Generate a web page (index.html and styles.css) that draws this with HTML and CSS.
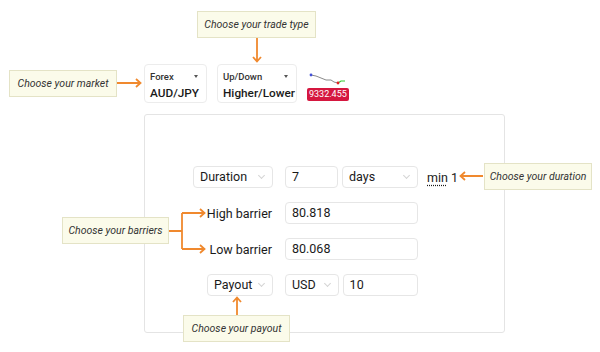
FILE: index.html
```html
<!DOCTYPE html>
<html lang="en">
<head>
    <meta charset="UTF-8">
    <title>Trade form guide</title>
    <link rel="stylesheet" href="styles.css">
</head>
<body>
    <div class="page">
        <div class="header">
            <div class="picker picker-market">
                <div class="picker-label">Forex <span class="caret"></span></div>
                <div class="picker-value">AUD/JPY</div>
            </div>
            <div class="picker picker-type">
                <div class="picker-label">Up/Down <span class="caret"></span></div>
                <div class="picker-value">Higher/Lower</div>
            </div>
            <div class="spot">
                <svg class="spark" width="40" height="14" viewBox="0 0 40 14">
                    <polyline points="3,3 8,4 13,6 18,8 23,8 26,10 30,11" fill="none" stroke="#8a8a8a" stroke-width="1"/>
                    <polyline points="30,11 33,9 37,9" fill="none" stroke="#3c3" stroke-width="1.2"/>
                    <circle cx="3" cy="3" r="1.4" fill="#4452d8"/>
                    <circle cx="30" cy="11" r="1.4" fill="#e02424"/>
                </svg>
                <div class="spot-badge">9332.455</div>
            </div>
        </div>

        <div class="panel">
            <div class="form-grid">
                <div class="field select w-duration">Duration</div>
                <div class="pair">
                    <div class="field w-amount">7</div>
                    <div class="field select w-unit">days</div>
                </div>
                <div class="hint"><abbr>min</abbr> 1</div>

                <div class="label">High barrier</div>
                <div class="field w-wide">80.818</div>
                <div></div>

                <div class="label">Low barrier</div>
                <div class="field w-wide">80.068</div>
                <div></div>

                <div class="field select w-payout">Payout</div>
                <div class="pair">
                    <div class="field select w-currency">USD</div>
                    <div class="field w-unit">10</div>
                </div>
                <div></div>
            </div>
        </div>

        <!-- callouts -->
        <div class="note note-market">Choose your market</div>
        <div class="note note-type">Choose your trade type</div>
        <div class="note note-duration">Choose your duration</div>
        <div class="note note-barriers">Choose your barriers</div>
        <div class="note note-payout">Choose your payout</div>

        <svg class="arrows" width="600" height="352" viewBox="0 0 600 352">
            <g fill="none" stroke="#f0892e" stroke-width="1.8">
                <path d="M117 83 H140 M136 79 L140.5 83 L136 87"/>
                <path d="M257 38 V61 M253 57 L257 61.5 L261 57"/>
                <path d="M483 176 H461 M465 172 L460.5 176 L465 180"/>
                <path d="M169 231 H182 M182 213 V249 M182 213 H204 M182 249 H204 M200 209 L204.5 213 L200 217 M200 245 L204.5 249 L200 253"/>
                <path d="M237 315 V298 M233 302 L237 297.5 L241 302"/>
            </g>
        </svg>
    </div>
</body>
</html>
```

FILE: styles.css
```css
body { margin: 0; background: #fff; font-family: Roboto, "Noto Sans", Arial, sans-serif; color: #222; }
.page { position: relative; width: 600px; height: 352px; overflow: hidden; }

.header { display: flex; gap: 10px; padding: 64px 0 0 144px; height: 39px; }
.picker { flex-shrink: 0; box-sizing: border-box; height: 39px; border: 1px solid #ececec; border-radius: 4px; padding: 6px 5px 0 5px; }
.picker-market { width: 63px; }
.picker-type { width: 80px; }
.picker-label { display: flex; justify-content: space-between; align-items: center; font-size: 9.5px; font-weight: 500; line-height: 11px; color: #333; }
.caret { width: 0; height: 0; border-left: 2.5px solid transparent; border-right: 2.5px solid transparent; border-top: 3px solid #555; margin-right: 3px; }
.picker-value { margin-top: 4px; font-size: 11.8px; font-weight: 500; line-height: 15px; color: #1a1a1a; }

.spot { flex-shrink: 0; display: flex; flex-direction: column; align-items: center; padding-top: 8px; }
.spark { display: block; }
.spot-badge { margin-top: 2px; background: #d5173f; color: #fff; font-size: 9px; line-height: 13px; padding: 0 2px; border-radius: 2px; }

.panel { box-sizing: border-box; margin: 11px 0 0 144px; width: 361px; height: 219px; border: 1px solid #e4e4e4; border-radius: 3px; padding: 51px 0 0 48px; }
.form-grid { display: grid; grid-template-columns: 80px 133px auto; column-gap: 12px; row-gap: 14px; align-items: center; }
.form-grid > :nth-child(3n+1) { justify-self: end; }

.field { position: relative; box-sizing: border-box; height: 22px; border: 1px solid #e6e6e6; border-radius: 4px; padding: 0 6px; font-size: 12.5px; line-height: 20px; color: #1a1a1a; background: #fff; }
.select::after { content: ""; position: absolute; right: 8px; top: 6px; width: 4px; height: 4px; border-right: 1px solid #d4d4d4; border-bottom: 1px solid #d4d4d4; transform: rotate(45deg); }
.w-duration { width: 80px; }
.w-payout { width: 66px; }
.w-amount { width: 53px; }
.w-currency { width: 54px; }
.w-unit { width: 76px; }
.w-wide { width: 133px; }
.pair { display: flex; gap: 4px; }

.label { font-size: 12.5px; color: #1a1a1a; padding-right: 1px; }
.hint { font-size: 12.5px; color: #1a1a1a; margin-left: -3px; }
.hint abbr { text-decoration: underline dotted; text-underline-offset: 3px; }

.note { position: absolute; box-sizing: border-box; height: 27px; background: #fbfbea; border: 1px solid #e4e3c6; font-size: 10.5px; font-style: italic; line-height: 25px; text-align: center; color: #333; }
.note-market { left: 9px; top: 70px; width: 108px; }
.note-type { left: 197px; top: 11px; width: 119px; }
.note-duration { left: 484px; top: 163px; width: 108px; }
.note-barriers { left: 62px; top: 217px; width: 107px; }
.note-payout { left: 183px; top: 315px; width: 107px; }

.arrows { position: absolute; left: 0; top: 0; pointer-events: none; }
```
